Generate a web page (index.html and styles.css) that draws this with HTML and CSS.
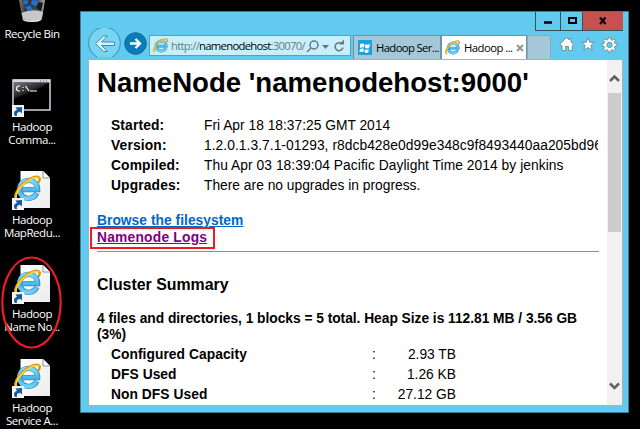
FILE: index.html
```html
<!DOCTYPE html>
<html lang="en">
<head>
<meta charset="utf-8">
<title>Hadoop NameNode</title>
<link rel="stylesheet" href="styles.css">
</head>
<body>
<svg width="0" height="0" class="defs">
  <defs>
    <linearGradient id="blue" x1="0" y1="0" x2="0" y2="1"><stop offset="0" stop-color="#7bdcfb"/><stop offset=".55" stop-color="#4ab5e8"/><stop offset="1" stop-color="#72d0f3"/></linearGradient>
    <linearGradient id="paper" x1="0" y1="0" x2="1" y2="1"><stop offset="0" stop-color="#fff"/><stop offset="1" stop-color="#ececec"/></linearGradient>
    <linearGradient id="bin" x1="0" x2="1"><stop offset="0" stop-color="#777"/><stop offset=".3" stop-color="#292c30"/><stop offset=".7" stop-color="#4a4d50"/><stop offset="1" stop-color="#aaa"/></linearGradient>
    <linearGradient id="console" x1="0" y1="0" x2=".7" y2="1"><stop offset="0" stop-color="#777"/><stop offset=".5" stop-color="#222"/><stop offset=".55" stop-color="#000"/></linearGradient>
    <symbol id="ie" viewBox="0 0 26 26">
      <path d="M22 17.500A8.700 8.700 0 1 1 22.800 14H8" fill="none" stroke="#2586bd" stroke-width="5"/>
      <path d="M21.700 17.500A8.700 8.700 0 1 1 22.500 14H8" fill="none" stroke="url(#blue)" stroke-width="4"/>
      <path d="M4 23.500C-1 24 1 16 8 9S23 0 24.500 3c.6 1.200-.1 3-1.200 4.600" fill="none" stroke="#d79a09" stroke-width="2.400"/>
      <path d="M4 23C0 23 2 16 8.500 9.500S22.500 1 24 3.300" fill="none" stroke="#ffd43a" stroke-width="1.500"/>
    </symbol>
    <symbol id="shortcut" viewBox="0 0 12 12">
      <path d="M0 0h12v12H0z" fill="#f4f4f4"/>
      <path d="M3 11C1 8 2.400 5.500 5 4.700L3.500 2.500 10 2v6.500L8 6.700C5.500 7 4.300 8.500 5 11z" fill="#155c9c"/>
    </symbol>
    <symbol id="page" viewBox="0 0 40 40">
      <path d="M8.500 1H31l7 7V38H8.500z" fill="url(#paper)"/>
      <path d="M31 1v7h7" fill="#fff" stroke="#777" stroke-width=".8"/>
      <use href="#ie" x="2" y="4.500" width="27" height="28"/>
      <use href="#shortcut" x="0" y="28" width="12" height="12"/>
    </symbol>
  </defs>
</svg>
<main class="desktop">
  <nav class="icons">
    <div class="item bin">
      <svg width="40" height="24" viewBox="0 0 40 24"><path d="M7 0h26l-3 19q-1 3-10 3t-9.500-3z" fill="url(#bin)"/><path d="M9.500 13q10-5 21.500-1l-1.500 7q-9 4-18.500 0z" fill="#c8c8c8"/><path d="M10 19q9 3.500 19.500 0-1 3-9.500 3t-10-3z" fill="#f2f2f2"/><path d="M13 0l4 1-2 4-4-2zM20 0l6 1-2 5-5-2zM13 7l5-2 3 5-5 1z" fill="#2170d5"/><path d="M27 2l4 1-2 8-5-3z" fill="#15191d"/></svg>
      <span>Recycle Bin</span>
    </div>
    <div class="item cmd">
      <svg width="40" height="38" viewBox="0 0 40 38"><path d="M1 1h37v30H1z" fill="#000" stroke="#d4d8e0" stroke-width="1.500"/><path d="M2 4h34L2 24z" fill="url(#console)"/><path d="M1 2h37" stroke="#d7dae3" stroke-width="3"/><path d="M28 2h7" stroke="#59616e" stroke-dasharray="1 2"/><g fill="none" stroke="#fff" stroke-width="1.200"><path d="M8 7H6L4.500 8.500v2L6 12h2M11 8v1m0 2v1M13.500 7l3.500 5M18 12h7"/></g><use href="#shortcut" x="0" y="26" width="12" height="12"/></svg>
      <span>Hadoop<br>Comma...</span>
    </div>
    <div class="item"><svg width="40" height="40"><use href="#page"/></svg><span>Hadoop<br>MapRedu...</span></div>
    <div class="item"><svg width="40" height="40"><use href="#page"/></svg><span>Hadoop<br>Name No...</span></div>
    <div class="item"><svg width="40" height="40"><use href="#page"/></svg><span>Hadoop<br>Service A...</span></div>
  </nav>
  <section class="window">
    <header class="titlebar"><div class="controls">
      <span class="min"><svg width="24" height="18"><path d="M8 10.500h8" stroke="#000" stroke-width="2.500"/></svg></span>
      <span class="max"><svg width="22" height="18"><path d="M8 6h7v5H8z" fill="none" stroke="#000" stroke-width="2"/></svg></span>
      <span class="close"><svg width="40" height="18"><path d="M17 5.500l5.500 6.500M22.500 5.500L17 12" stroke="#000" stroke-width="2"/></svg></span>
    </div></header>
    <div class="toolbar">
      <svg class="history" width="60" height="30" viewBox="0 0 60 30"><path d="M9 29A15.800 15.800 0 1 1 24 29" fill="#79d3f3" stroke="#3b8fad"/><path d="M7.500 15.500l8-7.500h4l-6 6h13v3.500h-13l6 6h-4z" fill="#d5f4ff" stroke="#3e8bab"/><circle cx="47.500" cy="15.500" r="10.800" fill="#087dba" stroke="#176894"/><path d="M42 15.500h10m-4.500-4.500l4.500 4.500-4.500 4.500" fill="none" stroke="#fff" stroke-width="2.300"/></svg>
      <div class="address"><svg width="15" height="15"><use href="#ie"/></svg><span class="url">http://<b>namenodehost</b>:30070/</span>
        <svg class="tools" width="41" height="16"><g fill="none" stroke="#647982" stroke-width="1.500"><circle cx="8" cy="6" r="4"/><path d="M5 9l-4 4M35.500 4.500A4 4 0 1 0 37 8.500"/></g><path d="M16 6h7l-3.500 4zM33 5.500h5v-5z" fill="#647982"/></svg>
      </div>
      <div class="tab old"><svg width="14" height="15"><path d="M0 0h14v15H0z" fill="#1ba1e2"/><path d="M2 4q2-1 4.500 0L6 7.500Q4 7 2 8zM7.500 4.300q2 1 4.500-.2l-1 4q-2 1-4-.3zM2 9q2-1 4-.1L5.500 12Q4 11.500 1.500 12zM7 9.200q2 .9 4 .2l-.8 3q-2 1-3.700-.2z" fill="#fff"/></svg><span>Hadoop Ser...</span></div>
      <div class="tab current"><svg width="15" height="15"><use href="#ie"/></svg><span>Hadoop ...</span><svg width="8" height="8"><path d="M1 1l6 6M7 1L1 7" stroke="#919191" stroke-width="1.800"/></svg></div>
      <div class="newtab"></div>
      <svg class="commands" width="66" height="22" viewBox="0 0 66 22"><g fill="#fff" stroke="#637f8a" stroke-width=".8"><path d="M1 10l6.500-6.500L10 6V4.500h2V8l2.500 2.500-1.300 1.200V16.500H9.500v-4h-3v4H3v-5l-1 .8z"/><path d="M29 3.500l1.800 4.700 4.900.2-3.900 3 1.400 4.900-4.200-2.800-4.200 2.800 1.400-4.900-3.900-3 4.900-.2z"/><path d="M49.500 3.500h2l.4 2 1.400.6 1.700-1.200 1.500 1.500-1.200 1.700.6 1.400 2 .4v2l-2 .4-.6 1.400 1.200 1.700L55 16.900l-1.700-1.200-1.400.6-.4 2h-2l-.4-2-1.400-.6-1.700 1.200-1.500-1.500 1.200-1.700-.6-1.400-2-.4v-2l2-.4.6-1.400-1.200-1.700L46 4.900l1.700 1.200 1.400-.6z"/><circle cx="50.500" cy="10.900" r="2.700" fill="#62caee"/></g></svg>
    </div>
    <div class="viewport">
      <article class="content">
        <h1>NameNode 'namenodehost:9000'</h1>
        <dl class="info">
          <dt>Started:</dt><dd class="started">Fri Apr 18 18:37:25 GMT 2014</dd>
          <dt>Version:</dt><dd class="version">1.2.0.1.3.7.1-01293, r8dcb428e0d99e348c9f8493440aa205bd96</dd>
          <dt>Compiled:</dt><dd class="compiled">Thu Apr 03 18:39:04 Pacific Daylight Time 2014 by jenkins</dd>
          <dt>Upgrades:</dt><dd class="upgrades">There are no upgrades in progress.</dd>
        </dl>
        <div class="links"><a class="browse">Browse the filesystem</a><a class="logs">Namenode Logs</a></div>
        <hr>
        <h3>Cluster Summary</h3>
        <p>4 files and directories, 1 blocks = 5 total. Heap Size is 112.81 MB / 3.56 GB<br>(3%)</p>
        <div class="stats">
          <b>Configured Capacity</b><i>:</i><span>2.93 TB</span>
          <b>DFS Used</b><i>:</i><span>1.26 KB</span>
          <b>Non DFS Used</b><i>:</i><span>27.12 GB</span>
        </div>
      </article>
      <aside class="scrollbar"><svg width="15" height="33"><path d="M3 21l4.500-4.500L12 21" fill="none" stroke="#606060" stroke-width="2.500"/></svg><div class="thumb"></div><svg class="down" width="15" height="28"><path d="M3 6.500l4.500 4.500L12 6.500" fill="none" stroke="#606060" stroke-width="2.500"/></svg></aside>
    </div>
  </section>
</main>
<svg class="highlight" width="64" height="100"><ellipse cx="31.500" cy="48.500" rx="29.200" ry="45" fill="none" stroke="#ed1c24" stroke-width="2.200"/></svg>
</body>
</html>
```

FILE: styles.css
```css
* { box-sizing: border-box; }
body { margin: 0; background: #000; font-family: "Liberation Sans", Arial, sans-serif; overflow: hidden; }
svg { display: block; flex: none; }
.defs { position: absolute; }
.desktop { display: flex; width: 640px; height: 429px; overflow: hidden; }
.icons { width: 80px; display: grid; grid-template-rows: 79px 91px 94px 94px 94px; flex: none; }
.item { width: 64px; display: flex; flex-direction: column; align-items: center; font: 11.5px/13px "Open Sans", sans-serif; letter-spacing: -.45px; color: #fff; white-space: nowrap; text-align: center; }
.item svg { margin-bottom: 3px; }
.window { width: 549px; height: 402px; margin-top: 11px; flex: none; background: #62caee; border: 1px solid #397c94; padding: 0 7px 7px; }
.titlebar { height: 23px; display: flex; justify-content: flex-end; margin-right: -2px; }
.controls { display: flex; height: 19px; width: 88px; border: 1px solid #35515c; border-top: 0; }
.controls span { height: 18px; }
.min { border-right: 1px solid #35515c; width: 25px; }
.max { border-right: 1px solid #35515c; width: 22px; }
.close { width: 40px; background: #c75050; }
.toolbar { height: 24px; display: flex; font: 11.3px/22px "Open Sans", sans-serif; white-space: nowrap; }
.toolbar > * { flex: none; }
.history { margin-top: -7px; }
.address { width: 202px; height: 21px; margin-left: 1px; background: #c9effc; border: 1px solid #4ba5c7; display: flex; align-items: center; padding-left: 3px; }
.url { color: #697b83; margin-left: 3px; letter-spacing: -.72px; width: 134px; }
.url b { color: #000; font-weight: 400; }
.tools { margin: 3px 0 0 1px; }
.tab { height: 24px; display: flex; align-items: center; border: 1px solid #6594ab; border-bottom: 0; letter-spacing: -.53px; }
.old { width: 88px; margin-left: 2px; background: #a6c7d7; padding-left: 4px; gap: 4px; letter-spacing: -.63px; }
.current { width: 86px; background: #fff; gap: 4px; padding-left: 3px; }
.current span { width: 48px; }
.newtab { width: 24px; height: 24px; background: #a6c7d7; border: 1px solid #7faec2; border-bottom: 0; }
.commands { margin: -1px 0 0 8px; }
.viewport { height: 347px; width: 535px; background: #fff; border: 1px solid #aab1b5; display: flex; overflow: hidden; }
.content { width: 518px; height: 345px; padding: 7px 8px 0; font-size: 13.8px; line-height: 16px; white-space: nowrap; }
h1 { font-size: 27.6px; line-height: 32px; margin: 0 0 17px; }
.info { margin: 0 0 17px 14px; display: grid; grid-template-columns: 93px 394px; line-height: 20px; }
dt { font-weight: bold; letter-spacing: .15px; }
dd { margin: 0; overflow: hidden; }
.version { letter-spacing: .05px; }
.compiled { letter-spacing: .05px; }
.links { font-weight: bold; display: flex; flex-direction: column; align-items: flex-start; line-height: 16px; }
a { color: #0066cc; text-decoration: underline; }
.browse { letter-spacing: .03px; }
.logs { color: #800080; letter-spacing: .22px; position: relative; margin-top: 1px; }
.logs::after { content: ""; position: absolute; inset: -3px -8px -3px -7px; border: 2px solid #ed1c24; }
hr { border: 0; height: 1px; background: #909090; margin: 5px 0 24px; }
h3 { font-size: 15.9px; line-height: 18px; margin: 0 0 17px; }
p { font-weight: bold; margin: 0 0 2px; line-height: 16px; letter-spacing: -.035px; }
.stats { margin-left: 14px; display: grid; grid-template-columns: 261px 10px 74px; line-height: 20px; }
.stats b { letter-spacing: .05px; }
.stats i { font-style: normal; }
.stats span { text-align: right; }
.scrollbar { width: 15px; background: #f1f1f1; display: flex; flex-direction: column; }
.thumb { width: 13px; height: 139px; margin-left: 1px; background: #cdcdcd; }
.down { margin-top: auto; }
.highlight { position: absolute; left: 0; top: 254px; }
```
